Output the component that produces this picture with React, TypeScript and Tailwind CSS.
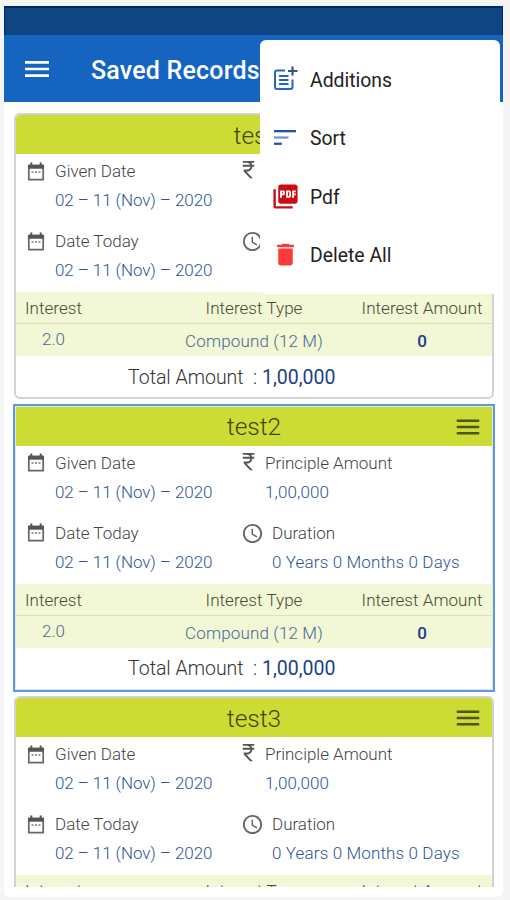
import React from "react";
import {
  MdAccessTime,
  MdCurrencyRupee,
  MdDelete,
  MdMenu,
  MdPictureAsPdf,
} from "react-icons/md";

interface RecordData {
  name: string;
  selected?: boolean;
}

const records: RecordData[] = [
  { name: "test" },
  { name: "test2", selected: true },
  { name: "test3" },
];

const PostAddIcon = () => (
  <svg width="26" height="26" viewBox="0 0 26 26" fill="none">
    <path
      d="M13 4.500H5a2 2 0 0 0-2 2v14.500a2 2 0 0 0 2 2h13.500a2 2 0 0 0 2-2V13.500"
      stroke="#2a63c6"
      strokeWidth="2"
    />
    <path d="M7 10h9.500M7 14h9.500M7 18h9.500" stroke="#2a63c6" strokeWidth="2.200" />
    <path d="M20.500 0.500v9M16 5h9.500" stroke="#34508f" strokeWidth="2.200" />
  </svg>
);

const SortIcon = () => (
  <svg width="22" height="16" viewBox="0 0 22 16">
    <path d="M0 0h22v2.300H0z" fill="#1f4fb8" />
    <path d="M0 6.400h14.500v2.300H0z" fill="#7b94cf" />
    <path d="M0 12.600h7.800v2.300H0z" fill="#1f4fb8" />
  </svg>
);

const CalendarIcon = () => (
  <svg width="18" height="20" viewBox="0 0 18 20" fill="none">
    <path d="M1.800 3.500h14.400v14.200H1.800z" stroke="#666" strokeWidth="1.700" strokeLinejoin="round" />
    <path d="M1 2.700h16v4H1z" fill="#555" />
    <path d="M4.300 0.500v3M13.700 0.500v3" stroke="#555" strokeWidth="2" />
    <path d="M4.500 10h2M8 10h2M11.500 10h2" stroke="#777" strokeWidth="1.600" />
  </svg>
);

const menuItems = [
  { label: "Additions", icon: <PostAddIcon /> },
  { label: "Sort", icon: <SortIcon /> },
  { label: "Pdf", icon: <MdPictureAsPdf size={29} color="#cc0c12" /> },
  { label: "Delete All", icon: <MdDelete size={29} color="#fb3a3c" /> },
];

const Field = ({
  icon,
  label,
  value,
  indent,
  tracking = "",
}: {
  icon: React.ReactNode;
  label: string;
  value: string;
  indent: string;
  tracking?: string;
}) => (
  <div className="leading-[29px] text-[17px] whitespace-nowrap">
    <div className="flex items-center text-[#444]">
      <span className={`flex shrink-0 ${indent}`}>{icon}</span>
      <span>{label}</span>
    </div>
    <div className="flex text-[#2d5596]">
      <span className={`shrink-0 ${indent}`} />
      <span className={tracking}>{value}</span>
    </div>
  </div>
);

const RecordCard = ({ data }: { data: RecordData }) => (
  <div
    className={`h-[286px] shrink-0 mb-[5.5px] border-2 bg-white overflow-hidden ${
      data.selected
        ? "border-[#e4e4e8] outline-2 -outline-offset-1 outline-[#5e9ad6]"
        : "rounded-md border-[#d2d2d4]"
    }`}
  >
    <div className="h-[39px] bg-[#cddc35] flex items-center justify-center relative text-[#3f4514]">
      <h2 className="pt-[3px] text-[24.5px] font-light">{data.name}</h2>
      <MdMenu size={30} className="absolute right-[9px] top-[5px] text-[#4f551c]" />
    </div>
    <div className="h-[138px] pt-[3px] pl-[11px] grid grid-cols-[215px_1fr] content-start gap-y-3">
      <Field
        indent="w-7"
        icon={<CalendarIcon />}
        label="Given Date"
        value="02 – 11 (Nov) – 2020"
        tracking="tracking-[-0.08px]"
      />
      <Field
        indent="w-[23px]"
        icon={<MdCurrencyRupee size={23} color="#555" className="-ml-[5px] -mt-1" />}
        label="Principle Amount"
        value="1,00,000"
        tracking="tracking-[0.13px]"
      />
      <Field
        indent="w-7"
        icon={<CalendarIcon />}
        label="Date Today"
        value="02 – 11 (Nov) – 2020"
        tracking="tracking-[-0.08px]"
      />
      <Field
        indent="w-[30px]"
        icon={<MdAccessTime size={23} color="#666" className="-ml-px" />}
        label="Duration"
        value="0 Years 0 Months 0 Days"
        tracking="tracking-[0.13px]"
      />
    </div>
    <div className="bg-[#f2f7d5] text-[17px] tracking-[0.05px] whitespace-nowrap">
      <div className="h-8 pt-[3px] border-b border-[#d9dfbe] flex items-center text-[#444a35]">
        <span className="w-[75px] shrink-0 pl-[9px]">Interest</span>
        <span className="w-[326px] shrink-0 text-center">Interest Type</span>
        <span className="w-[150px] shrink-0 -ml-[70px] text-center">Interest Amount</span>
      </div>
      <div className="h-8 flex items-center text-[#4a6896]">
        <span className="w-[75px] shrink-0 text-center">2.0</span>
        <span className="w-[326px] shrink-0 text-center pt-1 tracking-[0.15px]">
          Compound (12 M)
        </span>
        <span className="w-[150px] shrink-0 -ml-[70px] text-center pt-1 font-medium text-[#1a3f88]">
          0
        </span>
      </div>
    </div>
    <div className="h-[41px] pt-0.5 flex items-center pl-28 text-[19.5px] whitespace-pre">
      <span className="text-[#333]">Total Amount  : </span>
      <span className="font-normal text-[#1a3f88]">1,00,000</span>
    </div>
  </div>
);

const OptionsMenu = () => (
  <div className="absolute left-[256px] top-[34px] w-[240px] h-[254px] rounded-md bg-white pt-[11px]">
    {menuItems.map((item) => (
      <div
        key={item.label}
        className="h-[58.5px] flex items-center text-[19.4px] font-normal text-[#222]"
      >
        <span className="w-[50px] pb-0.5 flex justify-center">{item.icon}</span>
        <span>{item.label}</span>
      </div>
    ))}
  </div>
);

const App = () => {
  return (
    <div className="h-[900px] w-[510px] bg-[#f5f5f6] pl-1 pt-1.5 overflow-hidden font-['Roboto',sans-serif] font-light">
      <main className="relative w-[499px] h-[891px] rounded-b-md bg-white">
        <div className="h-[29px] bg-[#0f4580] border-t-2 border-x border-[#00246e]" />
        <header className="h-[67px] bg-[#1565c0] flex items-center text-white">
          <MdMenu size={32} className="ml-[17px]" />
          <h1 className="ml-[38px] pt-1 text-[25px] font-medium tracking-[0.2px]">
            Saved Records
          </h1>
        </header>
        <div className="h-[785px] pt-[11px] pl-[10px] pr-[9px] flex flex-col overflow-hidden">
          {records.map((record) => (
            <RecordCard key={record.name} data={record} />
          ))}
        </div>
        <OptionsMenu />
      </main>
    </div>
  );
};

export default App;
